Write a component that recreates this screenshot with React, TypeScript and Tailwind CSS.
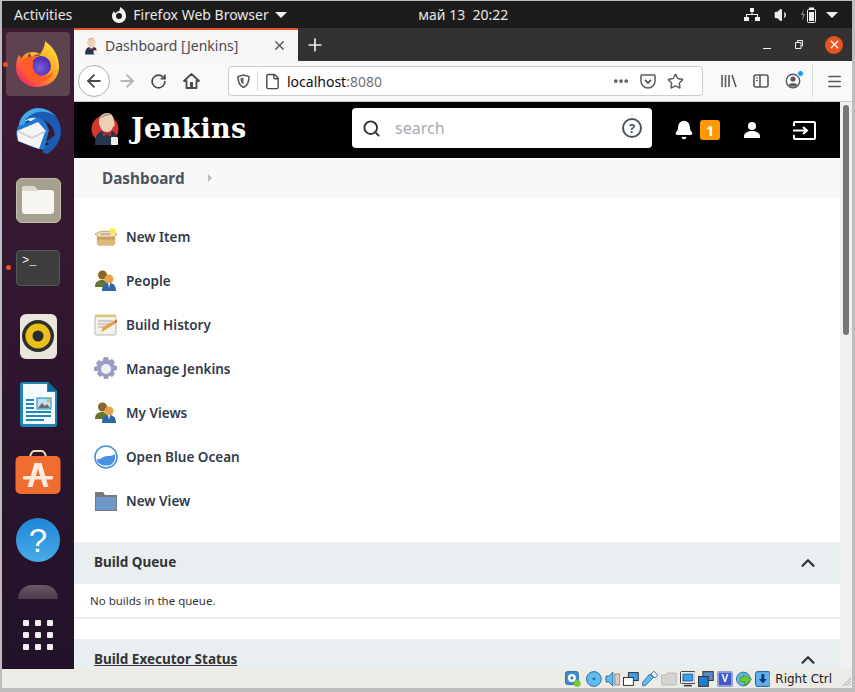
import { ChevronUp, Ellipsis, Menu, RotateCw, Search, X, Plus, ArrowLeft, ArrowRight, File, Star, Bell, Volume1 } from 'lucide-react';

const UI = "font-['Noto_Sans',sans-serif]";

function FirefoxLogo() {
  return (
    <svg width="46" height="48" viewBox="0 0 46 48">
      <defs>
        <linearGradient id="ffa" x1="0.9" y1="0.1" x2="0.1" y2="1">
          <stop offset="0" stopColor="#ffe03a" />
          <stop offset="0.45" stopColor="#ff9a1f" />
          <stop offset="1" stopColor="#f5156c" />
        </linearGradient>
        <radialGradient id="ffb" cx="0.45" cy="0.6" r="0.6">
          <stop offset="0" stopColor="#7c5ce0" />
          <stop offset="1" stopColor="#4a2ba8" />
        </radialGradient>
      </defs>
      <path d="M30 1c6 5 13 11 14 24C45 38 35 47 22 47 10 47 1 38 1 27c0-5 1-9 3-12 1 1 2 3 2 4 1-3 5-6 9-7-3 4-2 6-1 7 3-3 7-4 10-3 3-5 6-9 6-15z" fill="url(#ffa)" />
      <circle cx="26" cy="26" r="10" fill="url(#ffb)" />
      <path d="M7 22c3-5 10-7 16-6-3 1-5 2-6 5 3 1 0 3 1 7 1 5 6 9 13 8 4-1 7-3 8-6-2 8-10 13-18 12C12 41 5 31 7 22z" fill="#ff5a2a" />
      <path d="M14 13c4-2 9-1 12 2-4-1-7 0-9 2z" fill="#ffb52e" />
    </svg>
  );
}

function Thunderbird() {
  return (
    <svg width="50" height="50" viewBox="0 0 50 50">
      <path d="M24 1C36 1 48 10 48 24c0 10-6 18-14 23l-5-2 3-3-4-1 8-4-3-2 9-7c-1-8-6-14-14-15-6-1-11 0-15 4l-4 5C9 13 14 4 24 1z" fill="#1b5bb4" />
      <path d="M24 1c8 0 14 3 19 8-6-4-12-5-18-4-5 1-9 4-12 7l-1 5-6 4C5 11 14 2 24 1z" fill="#43a8ea" />
      <path d="M3 27l2-8 8-2 3-6c6-2 13 0 17 5l3 7-5 20-12-3L5 34z" fill="#2179cf" />
      <path d="M4 24l21-9 8 9-1 1-6 17-21-8z" fill="#f5f5f5" />
      <path d="M4 24l15 7 14-7" fill="none" stroke="#c9cdd3" strokeWidth="1.400" />
      <path d="M12 14c3-3 8-4 11-3l-5 3z" fill="#d9ecf8" />
      <circle cx="15" cy="14.500" r="1.200" fill="#0d3a78" />
    </svg>
  );
}

function Files() {
  return (
    <div className="w-[45px] h-[45px] rounded-[6px] bg-[#a5a08f] border border-[#c2bdac] flex items-center justify-center">
      <svg width="34" height="30" viewBox="0 0 34 30">
        <path d="M1 4a3 3 0 0 1 3-3h9l4 4h13a3 3 0 0 1 3 3v18a3 3 0 0 1-3 3H4a3 3 0 0 1-3-3z" fill="#f6f5f2" />
        <path d="M1 6V4a3 3 0 0 1 3-3h9l4 5z" fill="#dcd9d0" />
      </svg>
    </div>
  );
}

function Terminal() {
  return (
    <div className="w-[44px] h-[36px] rounded-[4px] bg-[#3d3d3d] border border-[#565656] px-[5px] pt-[3px]">
      <span className="block font-['Liberation_Mono',monospace] text-[12px] leading-[14px] text-[#f0f0f0]">&gt;_</span>
    </div>
  );
}

function Rhythmbox() {
  return (
    <div className="w-[37px] h-[45px] rounded-[6px] bg-[#e9e6dc] flex items-center justify-center">
      <svg width="32" height="32" viewBox="0 0 32 32">
        <circle cx="16" cy="16" r="16" fill="#2e2e2e" />
        <circle cx="16" cy="16" r="12.500" fill="#eac11b" />
        <circle cx="16" cy="16" r="5.500" fill="#2b2b2b" />
      </svg>
    </div>
  );
}

function Writer() {
  return (
    <svg width="37" height="45" viewBox="0 0 37 45">
      <path d="M3 0h25l9 9v33a3 3 0 0 1-3 3H3a3 3 0 0 1-3-3V3a3 3 0 0 1 3-3z" fill="#1f87b8" />
      <path d="M3 2h24v8h8v32H3z" fill="#f4fafd" />
      <path d="M28 0l9 9h-9z" fill="#0e6a96" />
      <rect x="6" y="17" width="8" height="2" fill="#1f87b8" />
      <rect x="6" y="21" width="8" height="2" fill="#1f87b8" />
      <rect x="6" y="25" width="8" height="2" fill="#1f87b8" />
      <rect x="6" y="29" width="25" height="2" fill="#1f87b8" />
      <rect x="6" y="33" width="25" height="2" fill="#1f87b8" />
      <rect x="6" y="37" width="18" height="2" fill="#1f87b8" />
      <rect x="17" y="16" width="14" height="11" fill="#bfe0ef" stroke="#1f87b8" />
      <path d="M18 26l4-5 3 3 2-2 3 4z" fill="#6a6a6a" />
      <rect x="27" y="17" width="3" height="3" fill="#f0b429" />
    </svg>
  );
}

function SoftwareBag() {
  return (
    <svg width="46" height="44" viewBox="0 0 46 44">
      <path d="M15 8c0-3 2-7 4-7h8c2 0 4 4 4 7" fill="none" stroke="#f3d9b8" strokeWidth="2" />
      <rect x="0.500" y="6" width="45" height="38" rx="5" fill="#f06d30" />
      <path d="M19.500 13h7l7 24h-5l-5.500-18-5.500 18h-5z" fill="#fbeadd" />
      <rect x="8" y="26" width="30" height="3.500" rx="1" fill="#fbeadd" />
    </svg>
  );
}

function HelpBall() {
  return (
    <div className="w-[44px] h-[44px] rounded-full bg-gradient-to-b from-[#1f86d8] to-[#47ace6] flex items-center justify-center">
      <span className="font-['Liberation_Sans',sans-serif] text-[33px] leading-none text-white">?</span>
    </div>
  );
}

function JenkinsHead({ size = 34, ring = true }: { size?: number; ring?: boolean }) {
  return (
    <svg width={size} height={size} viewBox="0 0 34 34">
      {ring && <circle cx="14" cy="17" r="13.500" fill="#d33833" />}
      <path d="M8 9c0-5 4-8 8-8 5 0 7 4 7 9 1 1 1 4-1 5-1 3-3 5-6 5-4 0-6-3-7-6-1-1-1-3-1-5z" fill="#f0d0b4" />
      <path d="M9 7c2-4 7-6 11-4-4 0-8 1-11 4z" fill="#8f7a6a" />
      <path d="M4 33c0-8 2-12 7-14l5 3 5-3c4 1 5 5 5 8l-3 6H5z" fill="#27364d" />
      <path d="M12 20l4 3 4-3v4l-4-1-4 1z" fill="#c8302b" />
      <rect x="20" y="25" width="7" height="8" rx="1" fill="#f1efe9" />
    </svg>
  );
}

function NewItemIcon() {
  return (
    <svg width="25" height="18" viewBox="0 0 25 18">
      <path d="M3 7h19v9l-2 2H5l-2-2z" fill="#dcb87c" />
      <path d="M1 6l6-3h11l6 3-3 3H4z" fill="#f3e0b4" stroke="#a8834a" strokeWidth="0.700" />
      <rect x="7" y="5" width="10" height="2" fill="#b8b0a0" />
      <rect x="3" y="10" width="19" height="1.500" fill="#c7985a" />
      <circle cx="19.500" cy="3" r="3" fill="#fbe84a" />
    </svg>
  );
}

function PeopleIcon() {
  return (
    <svg width="22" height="22" viewBox="0 0 22 22">
      <circle cx="7.500" cy="5" r="4.500" fill="#8a6428" />
      <path d="M0 17c0-5 3-7 7-7s6 2 6 7z" fill="#66752f" />
      <circle cx="14" cy="9" r="4.500" fill="#e8a348" />
      <path d="M7 21c0-6 3-8 7-8s7 2 7 8z" fill="#2f66a8" />
      <path d="M13 13h2l-1 5z" fill="#fff" />
    </svg>
  );
}

function HistoryIcon() {
  return (
    <svg width="24" height="22" viewBox="0 0 24 22">
      <rect x="1" y="2" width="21" height="19" rx="1" fill="#f3f2ea" stroke="#b9b9b0" />
      <rect x="1" y="0.500" width="21" height="2.500" fill="#d8c47a" />
      <path d="M4 7h15M4 10h12M4 13h8" stroke="#a7a7a0" />
      <path d="M7 18l2-5 11-6 2 2-11 7z" fill="#e2a33a" />
      <path d="M20 7l2 2 1-2-1-1z" fill="#d33833" />
    </svg>
  );
}

function GearIcon() {
  return (
    <svg width="24" height="24" viewBox="0 0 24 24">
      <path d="M10 0h4l1 3.500 3-1.500 3 3-1.500 3 3.500 1v4l-3.500 1 1.500 3-3 3-3-1.500-1 3.500h-4l-1-3.500-3 1.500-3-3 1.500-3L0 14v-4l3.500-1L2 6l3-3 3 1.500z" fill="#9a9cc4" />
      <circle cx="12" cy="12" r="5" fill="#f0f0f6" />
    </svg>
  );
}

function OceanIcon() {
  return (
    <svg width="24" height="24" viewBox="0 0 24 24">
      <circle cx="12" cy="12" r="11" fill="#fff" stroke="#4a90e2" strokeWidth="1.600" />
      <path d="M3 14c4 1 6-3 10-3 3 0 5 0 8-2 1 5-1 8-3 10-3 2-9 2-12 0-2-1-3-3-3-5z" fill="#4a90e2" />
    </svg>
  );
}

function FolderIcon() {
  return (
    <svg width="22" height="20" viewBox="0 0 22 20">
      <path d="M0 1h8l2 3h12v16H0z" fill="#76787c" />
      <rect x="1" y="6" width="20" height="13" fill="#6f97c8" />
    </svg>
  );
}

const menu = [
  { label: 'New Item', icon: <NewItemIcon /> },
  { label: 'People', icon: <PeopleIcon /> },
  { label: 'Build History', icon: <HistoryIcon /> },
  { label: 'Manage Jenkins', icon: <GearIcon /> },
  { label: 'My Views', icon: <PeopleIcon /> },
  { label: 'Open Blue Ocean', icon: <OceanIcon /> },
  { label: 'New View', icon: <FolderIcon /> },
];

function TopBar() {
  return (
    <div className={`h-[27px] bg-[#1c1c1c] flex items-center text-[14px] text-[#e8e8e8] ${UI}`}>
      <span className="ml-3">Activities</span>
      <svg className="ml-[39px]" width="16" height="16" viewBox="0 0 16 16">
        <path d="M9 0c4 2 6 5 6 9 0 4-3 7-7 7s-7-3-7-7c0-2 1-4 2-5 0 1 1 2 2 2 0-1 2-2 3-2 1-1 1-3 1-4z" fill="#f2f2f2" />
        <circle cx="8" cy="9" r="3" fill="#1c1c1c" />
      </svg>
      <span className="ml-[6px] w-[139px] whitespace-nowrap">Firefox Web Browser</span>
      <div className="ml-[3px] w-0 h-0 border-l-[6px] border-r-[6px] border-t-[6px] border-l-transparent border-r-transparent border-t-[#f0f0f0]" />
      <span className="ml-[131px] whitespace-pre">май 13  20:22</span>
      <svg className="ml-[236px]" width="16" height="15" viewBox="0 0 16 15">
        <path d="M6 1h4v4H6zM0 10h5v4H0zM11 10h5v4h-5zM7.500 5h1v2H14v3h-1V8H3v2H2V7h5.500z" fill="#f2f2f2" />
      </svg>
      <Volume1 className="ml-[14px]" size={16} color="#ececec" fill="#ececec" />
      <svg className="ml-[11px]" width="16" height="16" viewBox="0 0 16 16">
        <path d="M3 2L0 8h2l-1 6 3-7H2z" fill="#8a8a8a" />
        <rect x="6.500" y="2.500" width="8" height="13" rx="1" fill="none" stroke="#f2f2f2" />
        <rect x="8" y="0.500" width="5" height="2" fill="#f2f2f2" />
        <rect x="8" y="5" width="5" height="9" fill="#f2f2f2" />
      </svg>
      <div className="ml-[9px] w-0 h-0 border-l-[6px] border-r-[6px] border-t-[6px] border-l-transparent border-r-transparent border-t-[#f0f0f0]" />
    </div>
  );
}

function Dock() {
  return (
    <div className="relative w-[72px] shrink-0 bg-gradient-to-b from-[#3c1b33] to-[#21122a] flex flex-col items-center pt-[2px]">
      <div className="relative w-[64px] h-[64px] mt-[2px] rounded-[4px] bg-[#5d4250] flex items-center justify-center">
        <FirefoxLogo />
        <div className="absolute left-[-3px] top-[30px] w-[5px] h-[5px] rounded-full bg-[#e95420]" />
      </div>
      <div className="h-[72px] flex items-center justify-center"><Thunderbird /></div>
      <div className="h-[64px] flex items-center justify-center"><Files /></div>
      <div className="relative w-full h-[72px] flex items-center justify-center">
        <Terminal />
        <div className="absolute left-[4px] top-[33px] w-[5px] h-[5px] rounded-full bg-[#e95420]" />
      </div>
      <div className="h-[64px] flex items-center justify-center"><Rhythmbox /></div>
      <div className="h-[72px] flex items-center justify-center"><Writer /></div>
      <div className="h-[64px] flex items-center justify-center"><SoftwareBag /></div>
      <div className="h-[72px] flex items-center justify-center"><HelpBall /></div>
      <div className="mt-[9px] w-[40px] h-[14px] rounded-t-full bg-gradient-to-b from-[#6a5a68] to-[#4a3a4a]" />
      <div className="mt-[21px] grid grid-cols-3 gap-[6px]">
        {Array.from({ length: 9 }).map((_, i) => (
          <div key={i} className="w-[6px] h-[6px] rounded-[1px] bg-[#eeeeee]" />
        ))}
      </div>
    </div>
  );
}

function Browser() {
  return (
    <div className={`flex flex-col h-[74px] shrink-0 ${UI}`}>
      <div className="h-[33px] bg-[#333132] flex items-stretch">
        <div className="w-[224px] bg-[#f7f7f7] border-t-2 border-[#e95420] flex items-center pl-[9px]">
          <JenkinsHead size={18} ring={false} />
          <span className="ml-[4px] w-[167px] text-[14px] text-[#4a4a4f] whitespace-nowrap">Dashboard [Jenkins]</span>
          <X size={15} color="#4a4a4f" />
        </div>
        <Plus className="ml-[7px] mt-[7px]" size={20} color="#f0f0f0" />
        <div className="ml-auto mr-[9px] flex items-center">
          <div className="w-[8px] h-[1px] mt-[7px] bg-[#f0f0f0]" />
          <div className="ml-[24px]">
            <svg width="8" height="9" viewBox="0 0 8 9">
              <path d="M0.500 2.500h5.500v6H0.500zM2.500 2V0.500H7.500V6H6.500" fill="none" stroke="#f0f0f0" />
            </svg>
          </div>
          <div className="ml-[22px] w-[18px] h-[18px] rounded-full bg-[#e95420] flex items-center justify-center">
            <X size={13} color="#fff" strokeWidth={2.500} />
          </div>
        </div>
      </div>
      <div className="h-[41px] bg-[#f9f9fa] border-b border-[#c9c9c9] flex items-center pl-[4px]">
        <div className="w-[32px] h-[32px] rounded-full border border-[#b1b1b3] bg-white flex items-center justify-center">
          <ArrowLeft size={20} color="#4a4a4f" strokeWidth={2.200} />
        </div>
        <ArrowRight className="ml-[7px]" size={20} color="#b5b5b7" strokeWidth={2.200} />
        <RotateCw className="ml-[13px]" size={17} color="#4a4a4f" strokeWidth={2.400} />
        <svg className="ml-[16px]" width="17" height="16" viewBox="0 0 17 16">
          <path d="M8.500 1L1 8h2.500v7h10V8H16z" fill="none" stroke="#4a4a4f" strokeWidth="1.800" strokeLinejoin="round" />
          <rect x="7" y="9" width="3" height="6" fill="#4a4a4f" />
        </svg>
        <div className="ml-[28px] w-[475px] h-[30px] bg-white border border-[#cccccc] rounded-[4px] flex items-center">
          <svg className="ml-[8px]" width="13" height="14" viewBox="0 0 13 14">
            <path d="M6.500 1L1 2.500c0 5 1 9 5.500 11 4.500-2 5.500-6 5.500-11z" fill="none" stroke="#5a5a5f" strokeWidth="1.600" />
            <path d="M6.500 3.500L3.500 4.500c0 3 1 5 3 6z" fill="#5a5a5f" />
          </svg>
          <div className="ml-[7px] w-px h-[20px] bg-[#d7d7db]" />
          <File className="ml-[6px]" size={17} color="#4a4a4f" strokeWidth={2} />
          <span className="ml-[6px] text-[14px] text-[#0c0c0d]">localhost<span className="text-[#737373]">:8080</span></span>
          <Ellipsis className="ml-auto" size={18} color="#5a5a5f" strokeWidth={3} />
          <svg className="ml-[10px]" width="16" height="15" viewBox="0 0 16 15">
            <path d="M2 1h12a1 1 0 0 1 1 1v5a7 7 0 0 1-14 0V2a1 1 0 0 1 1-1z" fill="none" stroke="#5a5a5f" strokeWidth="1.500" />
            <path d="M5 6l3 3 3-3" fill="none" stroke="#5a5a5f" strokeWidth="1.800" />
          </svg>
          <Star className="ml-[11px] mr-[18px]" size={17} color="#5a5a5f" strokeWidth={2} />
        </div>
        <svg className="ml-[18px]" width="16" height="14" viewBox="0 0 16 14">
          <path d="M1 1v12M4.500 1v12M8 1v12M11 1l4 12" stroke="#5a5a5f" strokeWidth="1.600" fill="none" />
        </svg>
        <svg className="ml-[16px]" width="16" height="14" viewBox="0 0 16 14">
          <rect x="1" y="1" width="14" height="12" rx="2" fill="none" stroke="#5a5a5f" strokeWidth="1.600" />
          <path d="M7 1v12" stroke="#5a5a5f" strokeWidth="1.600" />
          <path d="M3 4h2M3 6.500h2" stroke="#5a5a5f" />
        </svg>
        <div className="relative ml-[16px]">
          <svg width="16" height="16" viewBox="0 0 16 16">
            <circle cx="8" cy="8" r="6.700" fill="none" stroke="#5a5a5f" strokeWidth="1.400" />
            <circle cx="8" cy="6" r="2.600" fill="#5a5a5f" />
            <path d="M3.500 12c1-2.500 8-2.500 9 0-2 2-7 2-9 0z" fill="#5a5a5f" />
          </svg>
          <div className="absolute right-[-3px] top-[-3px] w-[7px] h-[7px] rounded-full bg-[#0a9dff] border border-white" />
        </div>
        <div className="ml-[11px] w-px h-[32px] bg-[#d7d7db]" />
        <Menu className="ml-[13px]" size={17} color="#5a5a5f" strokeWidth={2.200} />
      </div>
    </div>
  );
}

function JenkinsHeader() {
  return (
    <div className="h-[56px] shrink-0 bg-black flex items-center">
      <div className="ml-[17px] w-[36px] -mt-[2px]"><JenkinsHead /></div>
      <span className="ml-[4px] -mt-[2px] font-['DejaVu_Serif',serif] font-bold text-[27px] text-white w-[221px] whitespace-nowrap tracking-[0.3px]">Jenkins</span>
      <div className="w-[300px] h-[40px] mb-[4px] bg-white rounded-[4px] flex items-center pl-[10px] pr-[10px]">
        <Search size={19} color="#333" strokeWidth={2.400} />
        <span className="ml-[14px] text-[16px] text-[#a8abb3]">search</span>
        <div className="ml-auto w-[20px] h-[20px] rounded-full border-2 border-[#4d545d] flex items-center justify-center text-[13px] font-bold text-[#4d545d] leading-none">?</div>
      </div>
      <Bell className="ml-[22px]" size={20} color="#fff" fill="#fff" />
      <div className="ml-[6px] w-[20px] h-[20px] rounded-[3px] bg-[#ff9800] text-white text-[15px] font-bold flex items-center justify-center leading-none">1</div>
      <svg className="ml-[23px]" width="18" height="18" viewBox="0 0 18 18">
        <circle cx="9" cy="5" r="4" fill="#fff" />
        <path d="M1 17v-2c0-3 4-5 8-5s8 2 8 5v2z" fill="#fff" />
      </svg>
      <svg className="ml-[32px]" width="23" height="19" viewBox="0 0 23 19">
        <path d="M1 5V2a1 1 0 0 1 1-1h19a1 1 0 0 1 1 1v15a1 1 0 0 1-1 1H2a1 1 0 0 1-1-1v-3" fill="none" stroke="#fff" strokeWidth="2" />
        <path d="M0 9.500h13M10 6l4 3.500-4 3.500" fill="none" stroke="#fff" strokeWidth="2" />
      </svg>
    </div>
  );
}

function Page() {
  return (
    <div className={`flex-1 min-w-0 flex flex-col overflow-hidden bg-white ${UI}`}>
      <JenkinsHeader />
      <div className="h-[40px] shrink-0 bg-[#f8f8f8] flex items-center pl-[28px]">
        <span className="w-[106px] text-[15.300px] font-bold text-[#4d545d]">Dashboard</span>
        <div className="w-0 h-0 border-y-[4px] border-l-[4px] border-y-transparent border-l-[#bbbbbb]" />
      </div>
      <div className="pt-[17px] pl-[20px] h-[344px] shrink-0 flex flex-col">
        {menu.map((m) => (
          <div key={m.label} className="h-[44px] shrink-0 flex items-center">
            <div className="w-[24px] flex justify-center">{m.icon}</div>
            <span className="ml-[8px] text-[13.500px] font-semibold text-[#333a4a]">{m.label}</span>
          </div>
        ))}
      </div>
      <div className="h-[42px] shrink-0 bg-[#e9eef0] flex items-center pl-[20px] pr-[21px] justify-between">
        <span className="mb-[2px] text-[13.500px] font-bold text-[#333]">Build Queue</span>
        <ChevronUp size={22} color="#333" strokeWidth={2.400} />
      </div>
      <div className="h-[35px] shrink-0 border-b-2 border-[#e9eef0] flex items-center pl-[16px] text-[11.500px] text-[#333]">No builds in the queue.</div>
      <div className="mt-[20px] h-[42px] shrink-0 bg-[#e9eef0] flex items-center pl-[20px] pr-[21px] justify-between">
        <span className="mb-[2px] text-[13.500px] font-bold text-[#333] underline">Build Executor Status</span>
        <ChevronUp size={22} color="#333" strokeWidth={2.400} />
      </div>
    </div>
  );
}

function Tray() {
  return (
    <div className="h-[19px] bg-[#edebe6] flex items-center pl-[563px] gap-[3px]">
      <svg className="mr-[2px]" width="16" height="16" viewBox="0 0 16 16">
        <rect x="0.500" y="0.500" width="13" height="13" rx="2" fill="#3d8fd4" stroke="#2a6fa8" />
        <circle cx="7" cy="7" r="4" fill="#fff" />
        <circle cx="7" cy="7" r="1.500" fill="#2a6fa8" />
        <circle cx="12.500" cy="12.500" r="3.500" fill="#7ec832" />
      </svg>
      <svg width="16" height="16" viewBox="0 0 16 16">
        <circle cx="8" cy="8" r="7.500" fill="#62bcf0" stroke="#2a6fa8" />
        <circle cx="8" cy="8" r="1.500" fill="#2a6fa8" />
      </svg>
      <svg width="16" height="16" viewBox="0 0 16 16">
        <path d="M1 5h3l4-4v14l-4-4H1z" fill="#62bcf0" stroke="#2a6fa8" />
        <rect x="10" y="3" width="5" height="11" fill="#cfcfcf" stroke="#8a8a8a" />
      </svg>
      <svg width="16" height="16" viewBox="0 0 16 16">
        <rect x="5.500" y="1.500" width="10" height="8" fill="#3aa0e8" stroke="#333" />
        <rect x="0.500" y="6.500" width="10" height="8" fill="#fff" stroke="#333" />
      </svg>
      <svg width="16" height="16" viewBox="0 0 16 16">
        <path d="M1 15l-1-3 8-9 4 3-8 8z" fill="#62bcf0" stroke="#2a6fa8" />
        <path d="M9 3l3-3 4 4-3 3z" fill="#fff" stroke="#2a6fa8" />
      </svg>
      <svg width="16" height="16" viewBox="0 0 16 16">
        <path d="M0.500 4h5l1-2h9v12h-15z" fill="#d6d4d0" stroke="#bcbab6" />
      </svg>
      <svg width="16" height="16" viewBox="0 0 16 16">
        <rect x="0.500" y="0.500" width="15" height="12" rx="1" fill="#fff" stroke="#333" />
        <rect x="3" y="3" width="10" height="7" fill="#3aa0e8" stroke="#1f5e96" />
        <rect x="4" y="14" width="8" height="1.500" fill="#333" />
      </svg>
      <svg width="16" height="16" viewBox="0 0 16 16">
        <rect x="5" y="0.500" width="10.500" height="9" fill="#5a88c0" stroke="#333" />
        <rect x="0.500" y="5.500" width="10" height="10" fill="#1a7fd0" stroke="#333" />
      </svg>
      <div className="w-[16px] h-[16px] rounded-[2px] bg-[#3a5ac8] border-2 border-[#9a9ad8] text-[10px] leading-[12px] text-center text-white font-bold font-['Liberation_Sans',sans-serif]">V</div>
      <svg width="16" height="16" viewBox="0 0 16 16">
        <circle cx="7.500" cy="8" r="7" fill="#62bcf0" stroke="#2a6fa8" />
        <path d="M7 3l9 5.500L8 15l1-4H4V6h4z" fill="#6cc832" stroke="#3c8c1c" strokeWidth="0.600" />
      </svg>
      <svg width="16" height="16" viewBox="0 0 16 16">
        <rect x="0.500" y="0.500" width="15" height="15" rx="2" fill="#62b0ea" stroke="#1f5e96" />
        <path d="M6.500 3h3v5h2.500L8 12.500 4 8h2.500z" fill="#0d3a78" />
      </svg>
      <span className="ml-[2px] font-['DejaVu_Sans',sans-serif] text-[12px] text-[#222] whitespace-nowrap">Right Ctrl</span>
      <svg className="ml-[7px] mt-[6px]" width="10" height="10" viewBox="0 0 10 10">
        <path d="M9 1L1 9M9 4L4 9M9 7L7 9" stroke="#a8a6a2" />
      </svg>
    </div>
  );
}

export default function App() {
  return (
    <div className="w-[855px] h-[692px] overflow-hidden bg-[#bdbdbd] pt-px pl-[2px] pr-[3px] pb-[4px] flex flex-col">
      <TopBar />
      <div className="flex-1 min-h-0 flex">
        <Dock />
        <div className="flex-1 min-w-0 flex flex-col">
          <Browser />
          <div className="flex-1 min-h-0 flex">
            <Page />
            <div className="w-[12px] shrink-0 bg-[#f0f0f0] flex justify-center pt-[3px]">
              <div className="w-[6px] h-[230px] rounded-full bg-[#757575]" />
            </div>
          </div>
        </div>
      </div>
      <Tray />
    </div>
  );
}
